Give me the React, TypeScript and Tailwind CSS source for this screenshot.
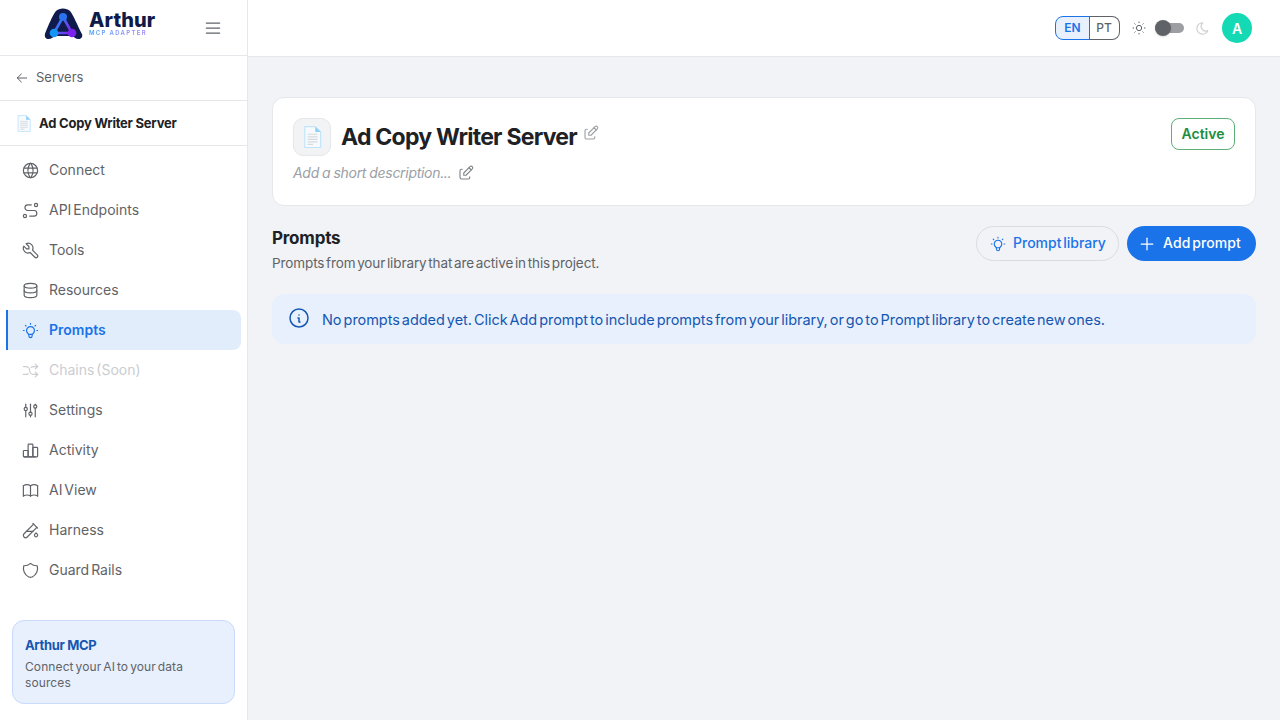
import React from "react";
import {
  TbArrowLeft, TbMenu2, TbWorld, TbRoute, TbTool, TbDatabase, TbBulb, TbArrowsShuffle,
  TbAdjustments, TbChartBar, TbBook, TbTestPipe, TbEdit, TbSun, TbMoon, TbInfoCircle, TbPlus,
} from "react-icons/tb";

function ShieldIcon({ className, strokeWidth }: { className?: string; strokeWidth?: number }) {
  return (
    <svg viewBox="0 0 24 24" fill="none" stroke="currentColor" strokeWidth={strokeWidth} strokeLinecap="round" strokeLinejoin="round" className={className}>
      <path d="M9.800 20.100a12 12 0 0 1 -6.300 -14.100a12 12 0 0 0 8.500 -3a12 12 0 0 0 8.500 3a12 12 0 0 1 -6.300 14.100" />
      <path d="M11 20.300l1 .7l1 -.7" />
    </svg>
  );
}

function DocIcon({ className }: { className: string }) {
  return (
    <svg viewBox="0 0 16 20" className={className}>
      <path d="M1 .6h9.500L15.400 5.500v14H1z" fill="#f7fafd" stroke="#bfe3fa" strokeWidth="1" />
      <path d="M10.500 .6v4.900h4.900z" fill="#8fd0f7" />
      <path d="M3.500 7.500h9M3.500 9.800h9M3.500 12.100h9M3.500 14.400h9M3.500 16.700h5" stroke="#d5dadf" strokeWidth="1.100" />
    </svg>
  );
}

function Logo() {
  return (
    <svg viewBox="0 0 40 34" className="w-[40px] h-[34px] shrink-0">
      <defs>
        <linearGradient id="lg" x1="0" y1="0" x2="1" y2="0.6">
          <stop offset="0" stopColor="#1d9bf5" />
          <stop offset="1" stopColor="#7c2df0" />
        </linearGradient>
      </defs>
      <path d="M1 27C2 24 9 7 12 4c3-3.500 11-3.500 14 0 3 3 10 20 12 23 1 3-1 5-3.500 5-3 0-4-2-6-3H11c-2 1-4 3-6.500 3C2 32 .2 30 1 27z" fill="#0f1b4c" />
      <path d="M19 10 10 26h18z" fill="none" stroke="url(#lg)" strokeWidth="2.600" />
      <circle cx="19" cy="10" r="4" fill="#2a73ee" />
      <circle cx="10" cy="26" r="4.300" fill="#1295f5" />
      <circle cx="28" cy="26" r="4.300" fill="#7b22ee" />
    </svg>
  );
}

const nav: { label: string; Icon: React.ComponentType<{ className?: string; strokeWidth?: number }>; active?: boolean; disabled?: boolean }[] = [
  { label: "Connect", Icon: TbWorld },
  { label: "API Endpoints", Icon: TbRoute },
  { label: "Tools", Icon: TbTool },
  { label: "Resources", Icon: TbDatabase },
  { label: "Prompts", Icon: TbBulb, active: true },
  { label: "Chains (Soon)", Icon: TbArrowsShuffle, disabled: true },
  { label: "Settings", Icon: TbAdjustments },
  { label: "Activity", Icon: TbChartBar },
  { label: "AI View", Icon: TbBook },
  { label: "Harness", Icon: TbTestPipe },
  { label: "Guard Rails", Icon: ShieldIcon },
];

export default function App() {
  return (
    <div className="flex h-screen w-full overflow-hidden bg-[#f1f3f6] text-[#202124] font-['Inter','Noto_Sans',sans-serif]">
      <aside className="w-[248px] shrink-0 bg-white border-r border-[#e5e7eb] flex flex-col">
        <div className="h-[56px] shrink-0 border-b border-[#e5e7eb] flex items-center pl-[44px] pr-[24px] justify-between">
          <div className="flex items-start gap-[5px] h-full pt-[7px]">
            <Logo />
            <div className="flex flex-col mt-[5px]">
              <span className="text-[20px] leading-[16px] font-extrabold text-[#101a4a] tracking-[0.1px]">Arthur</span>
              <span className="mt-[1px] text-[6px] leading-[7px] font-semibold tracking-[1.3px] bg-gradient-to-r from-[#3ea0f7] to-[#a77bf5] bg-clip-text text-transparent">MCP ADAPTER</span>
            </div>
          </div>
          <TbMenu2 className="text-[#5f6368] w-[20px] h-[20px]" strokeWidth={1.500} />
        </div>
        <div className="h-[45px] shrink-0 border-b border-[#e5e7eb] flex items-center pl-[14px] gap-[6px] text-[#5f6368]">
          <TbArrowLeft className="w-[16px] h-[16px]" strokeWidth={1.500} />
          <span className="text-[13px]">Servers</span>
        </div>
        <div className="h-[45px] shrink-0 border-b border-[#e5e7eb] flex items-center pl-[17px] gap-[8px]">
          <DocIcon className="w-[14px] h-[17px]" />
          <span className="text-[13px] pt-[2px] font-bold text-[#202124] tracking-[-0.22px]">Ad Copy Writer Server</span>
        </div>
        <nav className="flex flex-col pt-[4px] pl-[6px] pr-[6px] [word-spacing:-2px]">
          {nav.map(({ label, Icon, active, disabled }) => (
            <div
              key={label}
              className={
                active
                  ? "h-[40px] flex items-center gap-[9px] pl-[13px] rounded-r-[8px] bg-[#e2edfc] border-l-2 border-[#1a73e8] text-[#1a73e8] font-semibold"
                  : disabled
                  ? "h-[40px] flex items-center gap-[9px] pl-[15px] text-[#cacdd1]"
                  : "h-[40px] flex items-center gap-[9px] pl-[15px] text-[#5f6368]"
              }
            >
              <Icon className="w-[19px] h-[19px]" strokeWidth={1.500} />
              <span className="text-[14px] -mt-[2px]">{label}</span>
            </div>
          ))}
        </nav>
        <div className="mt-auto mx-[12px] mb-[16px] h-[84px] rounded-[12px] bg-[#e8f0fe] border border-[#c9dafc] px-[12px] pt-[14px]">
          <div className="text-[13px] leading-[20px] font-bold text-[#1557b0] tracking-[-0.35px]">Arthur MCP</div>
          <div className="text-[12px] leading-[16px] mt-[4px] text-[#5f6368] tracking-[0.1px] [word-spacing:-1.500px]">Connect your AI to your data sources</div>
        </div>
      </aside>

      <div className="flex-1 flex flex-col min-w-0">
        <header className="h-[57px] shrink-0 bg-white border-b border-[#e5e7eb] flex items-center justify-end pr-[28px]">
          <div className="flex h-[24px] text-[12px] font-semibold">
            <span className="w-[35px] flex items-center justify-center rounded-l-[8px] border border-[#1a73e8] bg-[#e8f0fe] text-[#1a73e8]">EN</span>
            <span className="w-[31px] -ml-px flex items-center justify-center rounded-r-[8px] border border-l-0 border-[#5f6368] text-[#5f6368] font-medium">PT</span>
          </div>
          <TbSun className="ml-[11px] w-[16px] h-[16px] text-[#5f6368]" strokeWidth={1.500} />
          <div className="relative ml-[8px] w-[29px] h-[10px] rounded-full bg-[#9c9ea1]">
            <span className="absolute left-0 -top-[3px] w-[16px] h-[16px] rounded-full bg-[#5f6368] shadow" />
          </div>
          <TbMoon className="ml-[11px] w-[15px] h-[15px] text-[#cfd1d4]" />
          <div className="ml-[12px] w-[30px] h-[30px] rounded-full bg-[#14d9b5] text-white font-semibold text-[14px] flex items-center justify-center">A</div>
        </header>
        <main className="flex-1 pt-[40px] px-[24px]">
          <section className="h-[109px] bg-white rounded-[12px] border border-[#e5e7eb] pt-[20px] pl-[20px] pr-[20px] flex justify-between">
            <div>
              <div className="flex items-center gap-[10px]">
                <div className="w-[38px] h-[38px] rounded-[10px] bg-[#f1f3f4] border border-[#e5e7eb] flex items-center justify-center">
                  <DocIcon className="w-[19px] h-[22px]" />
                </div>
                <h1 className="text-[23px] leading-[38px] font-bold text-[#202124] tracking-[-0.75px]">Ad Copy Writer Server</h1>
                <TbEdit className="-ml-[5px] -mt-[9px] w-[18px] h-[18px] text-[#9aa0a6]" strokeWidth={1.500} />
              </div>
              <div className="flex items-center gap-[6px] mt-[6px] text-[#9aa0a6]">
                <span className="text-[14px] leading-[22px] italic tracking-[-0.3px] [word-spacing:-0.500px]">Add a short description...</span>
                <TbEdit className="w-[18px] h-[18px] text-[#80868b]" strokeWidth={1.500} />
              </div>
            </div>
            <div className="h-[32px] w-[64px] rounded-[8px] border border-[#5eaf78] text-[#1e8e3e] text-[14px] font-semibold flex items-center justify-center pb-[2px]">Active</div>
          </section>

          <div className="flex justify-between mt-[20px]">
            <div>
              <h2 className="text-[17px] leading-[24px] font-bold text-[#202124] tracking-[-0.2px]">Prompts</h2>
              <p className="text-[13.500px] leading-[20px] mt-[3px] text-[#5f6368] tracking-[-0.1px] [word-spacing:-2px]">Prompts from your library that are active in this project.</p>
            </div>
            <div className="flex gap-[8px] h-[35px]">
              <div className="w-[143px] rounded-full border border-[#dadce0] flex items-center pl-[12px] gap-[6px] text-[#1a73e8] text-[14px] font-medium [word-spacing:-2px]">
                <TbBulb className="w-[18px] h-[18px]" strokeWidth={1.500} />
                <span className="-mt-[2px]">Prompt library</span>
              </div>
              <div className="w-[129px] rounded-full bg-[#1a73e8] flex items-center pl-[10px] gap-[6px] text-white text-[14px] font-medium tracking-[0.1px] [word-spacing:-2px]">
                <TbPlus className="w-[20px] h-[20px]" strokeWidth={1.500} />
                <span className="-mt-[2px]">Add prompt</span>
              </div>
            </div>
          </div>

          <div className="mt-[21px] h-[50px] rounded-[12px] bg-[#e8f0fe] flex items-center pl-[15px] gap-[11px] text-[#1557b0]">
            <TbInfoCircle className="w-[24px] h-[24px] -mt-[3px]" strokeWidth={1.500} />
            <span className="text-[14.500px] pt-[1px] tracking-[-0.05px] [word-spacing:-2px]">No prompts added yet. Click Add prompt to include prompts from your library, or go to Prompt library to create new ones.</span>
          </div>
        </main>
      </div>
    </div>
  );
}
